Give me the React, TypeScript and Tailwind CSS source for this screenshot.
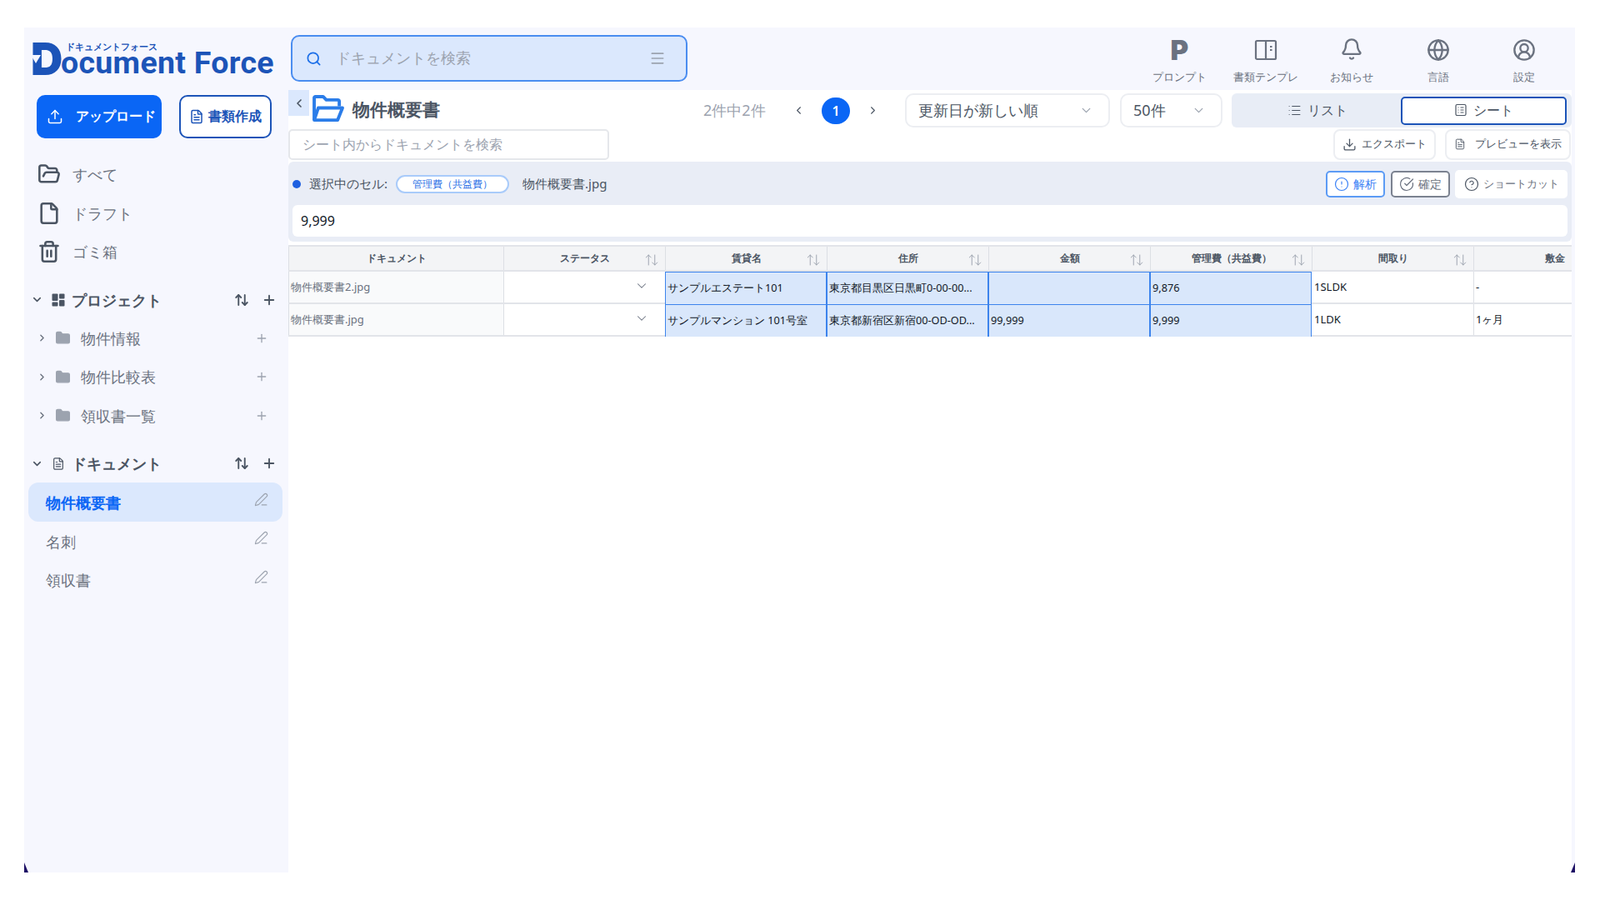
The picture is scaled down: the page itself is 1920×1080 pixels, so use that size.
import {
  ArrowUpDown,
  Bell,
  ChevronDown,
  ChevronLeft,
  ChevronRight,
  CircleAlert,
  CircleCheckBig,
  CircleHelp,
  CircleUserRound,
  Download,
  File,
  FileText,
  Folder,
  FolderOpen,
  Globe,
  List,
  Menu,
  PenLine,
  Plus,
  Search,
  Trash2,
  Upload,
} from 'lucide-react';

const font = 'font-[Inter,"Noto_Sans_CJK_JP",sans-serif]';

const navItems = [
  { label: 'すべて', Icon: FolderOpen },
  { label: 'ドラフト', Icon: File },
  { label: 'ゴミ箱', Icon: Trash2 },
];

const projects = ['物件情報', '物件比較表', '領収書一覧'];
const documents = ['物件概要書', '名刺', '領収書'];

const columns = ['ドキュメント', 'ステータス', '賃貸名', '住所', '金額', '管理費（共益費）', '間取り', '敷金'];

const rows = [
  ['物件概要書2.jpg', 'サンプルエステート101', '東京都目黒区日黒町0-00-00...', '', '9,876', '1SLDK', '-'],
  ['物件概要書.jpg', 'サンプルマンション 101号室', '東京都新宿区新宿00-OD-OD...', '99,999', '9,999', '1LDK', '1ヶ月'],
];

function GridIcon() {
  return (
    <svg viewBox="0 0 16 16" className="w-4 h-4 text-[#4b5563]" fill="currentColor">
      <rect x="0.5" y="0.5" width="7" height="8.5" rx="1" />
      <rect x="9" y="0.5" width="6.5" height="6" rx="1" />
      <rect x="0.5" y="10.5" width="7" height="5" rx="1" />
      <rect x="9" y="8" width="6.5" height="7.5" rx="1" />
    </svg>
  );
}

function TemplateIcon() {
  return (
    <svg viewBox="0 0 28 28" className="w-7 h-7" fill="none" stroke="currentColor" strokeWidth="2.2">
      <rect x="2" y="3" width="24" height="22" rx="1.5" />
      <path d="M14 3v22" />
      <path d="M19 10h2.5M19 14h2.5" />
    </svg>
  );
}

function SheetIcon() {
  return (
    <svg viewBox="0 0 16 16" className="w-4 h-4" fill="none" stroke="currentColor" strokeWidth="1.2">
      <rect x="2" y="1.5" width="12" height="13" rx="1.5" />
      <path d="M4.5 5h1M7.5 5h4M4.5 8h1M7.5 8h4M4.5 11h1M7.5 11h4" />
    </svg>
  );
}

function OpenFolderFilled() {
  return (
    <svg viewBox="0 0 40 34" className="w-[39px] h-[33px]" fill="none">
      <path d="M2 31V3.5C2 2.7 2.7 2 3.5 2H13l4 4h14c1.1 0 2 .9 2 2v6" stroke="#2b7de9" strokeWidth="4" strokeLinejoin="round" />
      <path d="M2 31l5-15h30l-6 15z" stroke="#2b7de9" strokeWidth="4" strokeLinejoin="round" />
    </svg>
  );
}

function Corner({ side }: { side: 'left' | 'right' }) {
  return (
    <svg
      viewBox="0 0 5 12"
      className={side === 'left' ? 'absolute left-0 bottom-0 w-[5px] h-[12px]' : 'absolute right-0 bottom-0 w-[5px] h-[12px]'}
    >
      <path d={side === 'left' ? 'M0 0L5 12H0z' : 'M5 0L0 12h5z'} fill="#1e1065" />
    </svg>
  );
}

function Logo() {
  return (
    <div className="relative h-[42px] mt-[15px] mb-[2px] ml-[8px] flex items-end text-[#1c54b8] whitespace-nowrap">
      <span className="text-[53px] leading-[38px] font-black h-[38px] w-[36px] font-[Inter,sans-serif]">D</span>
      <span className="text-[37.5px] leading-[30px] font-bold tracking-[0.3px] font-[Roboto,sans-serif]">ocument Force</span>
      <span className="absolute left-[42px] top-[2px] text-[11px] leading-[12px] font-bold">ドキュメントフォース</span>
      <svg viewBox="0 0 12 14" className="absolute left-0 top-[18px] w-[12px] h-[14px]">
        <path d="M0 0h12L6 10z" fill="#f6f7fe" />
      </svg>
    </div>
  );
}

function SectionHeader({ label, icon }: { label: string; icon: React.ReactNode }) {
  return (
    <div className="h-[24px] flex items-center pl-[8px] pr-[14px] text-[#4b5563]">
      <ChevronDown className="w-[15px] h-[15px] mr-[10px]" strokeWidth={2.5} />
      <span className="w-[16px] flex justify-center mr-[8px]">{icon}</span>
      <span className="text-[18px] font-bold leading-none">{label}</span>
      <ArrowUpDown className="w-[18px] h-[18px] ml-auto mr-[15px]" strokeWidth={2.5} />
      <Plus className="w-[18px] h-[18px]" strokeWidth={2.5} />
    </div>
  );
}

function Sidebar() {
  return (
    <aside className="w-[317px] shrink-0 flex flex-col">
      <Logo />
      <div className="flex mt-[22px] ml-[15px] gap-[21px]">
        <button className="w-[150px] h-[52px] rounded-[10px] bg-[#0a66f5] text-white flex items-center pl-[12px] font-bold text-[15.5px]">
          <Upload className="w-[20px] h-[20px] mr-[15px]" strokeWidth={1.8} />
          アップロード
        </button>
        <button className="w-[111px] h-[52px] rounded-[10px] bg-white border-2 border-[#1c54b8] text-[#1c54b8] flex items-center justify-center gap-[5px] font-bold text-[15.5px]">
          <FileText className="w-[18px] h-[18px]" strokeWidth={2} />
          書類作成
        </button>
      </div>
      <nav className="mt-[20px] flex flex-col">
        {navItems.map(({ label, Icon }) => (
          <div key={label} className="h-[46.5px] flex items-center pl-[16px] text-[#4b5563]">
            <Icon className="w-[28px] h-[28px] mr-[14px]" strokeWidth={2.2} />
            <span className="text-[18px] text-[#6b7280] leading-none">{label}</span>
          </div>
        ))}
      </nav>
      <div className="mt-[22px]">
        <SectionHeader label="プロジェクト" icon={<GridIcon />} />
      </div>
      <div className="mt-[11px] flex flex-col">
        {projects.map((p) => (
          <div key={p} className="h-[46.5px] flex items-center pl-[15px] pr-[24px] text-[#6b7280]">
            <ChevronRight className="w-[13px] h-[13px] mr-[9px]" strokeWidth={2.5} />
            <Folder className="w-[19px] h-[19px] mr-[12px] text-[#9ca3af]" fill="currentColor" strokeWidth={1.5} />
            <span className="text-[18px] leading-none">{p}</span>
            <Plus className="w-[16px] h-[16px] ml-auto text-[#9ca3af]" strokeWidth={2} />
          </div>
        ))}
      </div>
      <div className="mt-[22px]">
        <SectionHeader label="ドキュメント" icon={<FileText className="w-[17px] h-[17px]" strokeWidth={1.8} />} />
      </div>
      <div className="mt-[11px] flex flex-col ml-[5px] w-[305px]">
        {documents.map((d, i) => (
          <div
            key={d}
            className={
              i === 0
                ? 'h-[46.5px] rounded-[12px] bg-[#dbe8fd] flex items-center pl-[21px] pr-[17px] pt-[2px] text-[#0a66f5] font-bold'
                : 'h-[46.5px] rounded-[12px] flex items-center pl-[21px] pr-[17px] pt-[2px] text-[#6b7280]'
            }
          >
            <span className="text-[18px] leading-none">{d}</span>
            <PenLine className="w-[17px] h-[17px] ml-auto mb-[8px] text-[#9ca3af] font-normal" strokeWidth={1.6} />
          </div>
        ))}
      </div>
    </aside>
  );
}

function TopBar() {
  return (
    <header className="h-[75px] shrink-0 flex items-start relative">
      <div className="mt-[9px] ml-[3px] w-[476px] h-[56px] rounded-[10px] border-2 border-[#4a8df0] bg-[#dbe8fd] flex items-center pl-[16px] pr-[24px]">
        <Search className="w-[19px] h-[19px] text-[#1c6fe8] mr-[17px]" strokeWidth={2.2} />
        <span className="text-[18px] text-[#9ca3af] pb-[2px]">ドキュメントを検索</span>
        <Menu className="w-[20px] h-[20px] ml-auto text-[#9ca3af]" strokeWidth={2} />
      </div>
      <div className="ml-auto mr-[9px] flex text-[#6b7280]">
        {[
          { label: 'プロンプト', icon: <span className="text-[33px] leading-none font-black font-[Inter,sans-serif]">P</span> },
          { label: '書類テンプレ', icon: <TemplateIcon /> },
          { label: 'お知らせ', icon: <Bell className="w-7 h-7 mb-[3px]" strokeWidth={2} /> },
          { label: '言語', icon: <Globe className="w-7 h-7" strokeWidth={2} /> },
          { label: '設定', icon: <CircleUserRound className="w-7 h-7" strokeWidth={2} /> },
        ].map(({ label, icon }) => (
          <div key={label} className="w-[103.5px] flex flex-col items-center pt-[9px]">
            <div className="h-[36px] flex items-center justify-center">{icon}</div>
            <span className="mt-[6px] text-[13px] leading-[16px]">{label}</span>
          </div>
        ))}
      </div>
    </header>
  );
}

function Toolbar() {
  return (
    <div className="h-[47px] flex items-start">
      <div className="w-[25px] h-[31px] bg-[#dbe8fd] flex items-center justify-center text-[#4b5563]">
        <ChevronLeft className="w-[16px] h-[16px]" strokeWidth={2.5} />
      </div>
      <div className="ml-[4px] mt-[6px]">
        <OpenFolderFilled />
      </div>
      <h1 className="ml-[9px] mt-[10px] text-[21px] leading-[26px] font-bold text-[#4b5563]">物件概要書</h1>
      <div className="ml-auto flex items-center mt-[4px] h-[41px]">
        <span className="text-[18px] text-[#9ca3af] w-[107px] pb-[1px]">2件中2件</span>
        <ChevronLeft className="w-[15px] h-[15px] text-[#4b5563]" strokeWidth={1.8} />
        <span className="ml-[20px] w-[34px] h-[32px] rounded-full bg-[#0a66f5] text-white text-[16px] font-semibold flex items-center justify-center">1</span>
        <ChevronRight className="ml-[20px] w-[15px] h-[15px] text-[#4b5563]" strokeWidth={1.8} />
        <div className="ml-[31px] w-[246px] h-[41px] rounded-[10px] border-2 border-[#eceef2] bg-white flex items-center pl-[14px] pr-[18px] pb-[1px] text-[18px] text-[#4b5563]">
          更新日が新しい順
          <ChevronDown className="w-[17px] h-[17px] ml-auto text-[#9ca3af]" strokeWidth={1.8} />
        </div>
        <div className="ml-[12px] w-[123px] h-[41px] rounded-[10px] border-2 border-[#eceef2] bg-white flex items-center pl-[14px] pr-[18px] pb-[1px] text-[18px] text-[#4b5563]">
          50件
          <ChevronDown className="w-[17px] h-[17px] ml-auto text-[#9ca3af]" strokeWidth={1.8} />
        </div>
        <div className="ml-[11px] w-[408px] h-[41px] rounded-[6px] bg-[#e8edf6] flex items-center pl-[3px] pr-[6px]">
          <div className="flex-1 flex items-center justify-center gap-[7px] text-[#4b5563] text-[16px] pb-[1px]">
            <List className="w-[17px] h-[17px]" strokeWidth={1.6} />
            リスト
          </div>
          <div className="w-[199px] h-[34px] rounded-[5px] bg-white border-2 border-[#1c54b8] flex items-center justify-center gap-[7px] text-[#4b5563] text-[16px] pb-[1px]">
            <SheetIcon />
            シート
          </div>
        </div>
      </div>
    </div>
  );
}

function SubBar() {
  return (
    <div className="h-[37px] flex items-center pr-[1px]">
      <div className="w-[385px] h-[37px] rounded-[5px] border-2 border-[#e5e7eb] bg-white flex items-center pl-[15px] pb-[2px] text-[16px] text-[#9ca3af]">
        シート内からドキュメントを検索
      </div>
      <button className="ml-auto w-[123px] h-[37px] rounded-[8px] border-2 border-[#eceef2] bg-white flex items-center justify-center gap-[6px] pb-[1px] text-[13px] text-[#4b5563]">
        <Download className="w-[17px] h-[17px]" strokeWidth={1.8} />
        エクスポート
      </button>
      <button className="ml-[11px] w-[151px] h-[37px] rounded-[8px] border-2 border-[#eceef2] bg-white flex items-center justify-center gap-[11px] pb-[1px] text-[13px] text-[#4b5563]">
        <FileText className="w-[14px] h-[14px]" strokeWidth={1.6} />
        プレビューを表示
      </button>
    </div>
  );
}

function SelectionPanel() {
  return (
    <div className="mt-[2px] h-[96px] rounded-[6px] bg-[#e9edf6] px-[5px] flex flex-col">
      <div className="h-[52px] flex items-center pt-[1px]">
        <span className="w-[10px] h-[10px] rounded-full bg-[#1d5fe0]" />
        <span className="ml-[10px] text-[15px] text-[#4b5563]">選択中のセル:</span>
        <span className="ml-[10px] w-[136px] h-[22px] rounded-full bg-white border-2 border-[#a9cbfa] text-[#2a6fe6] text-[12px] flex items-center justify-center">
          管理費（共益費）
        </span>
        <span className="ml-[16px] text-[15px] text-[#4b5563]">物件概要書.jpg</span>
        <button className="ml-auto w-[71px] h-[32px] rounded-[5px] border-2 border-[#5c9bf5] bg-white text-[#3b82f6] text-[14px] flex items-center justify-center gap-[5px]">
          <CircleAlert className="w-[18px] h-[18px]" strokeWidth={1.6} />
          解析
        </button>
        <button className="ml-[7px] w-[71px] h-[32px] rounded-[5px] border-2 border-[#7b8290] bg-white text-[#6b7280] text-[14px] flex items-center justify-center gap-[5px]">
          <CircleCheckBig className="w-[18px] h-[18px]" strokeWidth={1.6} />
          確定
        </button>
        <button className="ml-[6px] w-[135px] h-[34px] rounded-[5px] bg-white text-[#6b7280] text-[13px] flex items-center justify-center gap-[5px]">
          <CircleHelp className="w-[18px] h-[18px] text-[#4b5563]" strokeWidth={1.6} />
          ショートカット
        </button>
      </div>
      <div className="h-[38px] rounded-[6px] bg-white flex items-center pl-[10px] text-[16px] text-[#111827]">9,999</div>
    </div>
  );
}

function Sheet() {
  return (
    <div className="mt-[4px] overflow-hidden">
      <div className="w-[1616px] border-t-2 border-[#e2e4e9]">
        <div className="flex h-[30px] bg-[#f3f4f6] border-b-2 border-[#e2e4e9]">
          {columns.map((c, i) => (
            <div
              key={c}
              className={
                i === 0
                  ? 'relative w-[259px] shrink-0 border-x border-[#dcdfe4] flex items-center justify-center text-[11.5px] font-semibold text-[#4b5563]'
                  : 'relative w-[194px] shrink-0 border-r border-[#dcdfe4] flex items-center justify-center text-[11.5px] font-semibold text-[#4b5563]'
              }
            >
              {c}
              {i > 0 && <ArrowUpDown className="absolute right-[7px] top-[7px] w-[18px] h-[18px] text-[#9ca3af]" strokeWidth={1.3} />}
            </div>
          ))}
        </div>
        {rows.map((row) => (
          <div key={row[0]} className="flex h-[39px] border-b-2 border-[#e2e4e9]">
            <div className="w-[259px] shrink-0 bg-[#f9fafb] border-x border-[#dcdfe4] flex items-center pl-[2px] text-[13px] text-[#6b7280]">
              {row[0]}
            </div>
            <div className="w-[194px] shrink-0 bg-white border-r border-[#dcdfe4] flex items-start justify-end pr-[19px] pt-[8px] text-[#6b7280]">
              <ChevronDown className="w-[18px] h-[18px]" strokeWidth={1.4} />
            </div>
            {row.slice(1).map((cell, c) => (
              <div
                key={c}
                className={
                  c < 4
                    ? '-mb-[2px] h-[41px] w-[194px] shrink-0 bg-[#d9e7fb] border-[1.5px] border-[#3d84ec] -ml-px mr-px flex items-center pl-[2px] pb-[2px] text-[12.7px] text-[#111827] whitespace-nowrap overflow-hidden'
                    : 'w-[194px] shrink-0 bg-white border-r border-[#dcdfe4] flex items-center pl-[2px] text-[13px] text-[#111827]'
                }
              >
                {cell}
              </div>
            ))}
          </div>
        ))}
      </div>
    </div>
  );
}

export default function App() {
  return (
    <div className={`w-[1920px] h-[1080px] bg-white pt-[33px] pl-[29px] overflow-hidden ${font}`}>
      <div className="relative w-[1861px] h-[1014px] bg-[#f6f7fe] flex">
        <Sidebar />
        <div className="flex-1 min-w-0 flex flex-col">
          <TopBar />
          <main className="flex-1 mr-[4px] bg-white flex flex-col min-h-0">
            <Toolbar />
            <SubBar />
            <SelectionPanel />
            <Sheet />
          </main>
        </div>
        <Corner side="left" />
        <Corner side="right" />
      </div>
    </div>
  );
}
